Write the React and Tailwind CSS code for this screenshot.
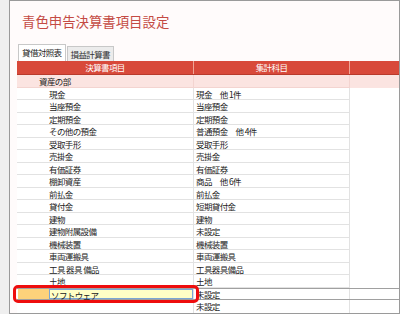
import React from "react";

const rows = [
  { a: "現金", b: "現金　他 1件" },
  { a: "当座預金", b: "当座預金" },
  { a: "定期預金", b: "定期預金" },
  { a: "その他の預金", b: "普通預金　他 4件" },
  { a: "受取手形", b: "受取手形" },
  { a: "売掛金", b: "売掛金" },
  { a: "有価証券", b: "有価証券" },
  { a: "棚卸資産", b: "商品　他 6件" },
  { a: "前払金", b: "前払金" },
  { a: "貸付金", b: "短期貸付金" },
  { a: "建物", b: "建物" },
  { a: "建物附属設備", b: "未設定" },
  { a: "機械装置", b: "機械装置" },
  { a: "車両運搬具", b: "車両運搬具" },
  { a: "工具 器具 備品", b: "工具器具備品" },
  { a: "土地", b: "土地" },
];

function App() {
  return (
    <div
      className="w-[400px] h-[314px] bg-[#efefef] flex overflow-hidden"
      style={{ fontFamily: '"Noto Sans CJK JP", "Noto Sans", sans-serif' }}
    >
      <div className="w-[9px] shrink-0" />

      <div className="flex-1 border border-[#9a9a9a] bg-[#fffbfb] flex flex-col">
        {/* title */}
        <h1 className="mt-[12px] ml-[12px] h-[16px] leading-[16px] text-[13.4px] text-[#c44a43]">
          青色申告決算書項目設定
        </h1>

        {/* tabs */}
        <div className="mt-[15px] ml-[8px] flex items-end gap-[1px] h-[17px]">
          <div className="h-[17px] px-[3px] bg-white border border-b-0 border-[#c8c8c8] text-[8.5px] leading-[15px] text-[#222] tracking-[-0.6px]">
            貸借対照表
          </div>
          <div className="h-[15px] px-[3px] bg-[#ececec] border border-b-0 border-[#c8c8c8] text-[8.5px] leading-[14px] text-[#333] tracking-[-0.6px]">
            損益計算書
          </div>
        </div>

        {/* table */}
        <div className="ml-[7px] flex flex-col text-[8.5px] text-[#222] tracking-[-0.6px]">
          <div className="flex h-[14px] bg-[#d8493a] text-white leading-[13px] border-b border-[#b83a2c]">
            <div className="w-[177px] text-center border-r border-[#f0a596]">決算書項目</div>
            <div className="w-[156px] text-center border-r border-[#f0a596]">集計科目</div>
            <div className="flex-1" />
          </div>

          <div className="flex h-[12.5px] bg-[#fbe4e1] leading-[12px]">
            <div className="w-[177px] pl-[22px] border-r border-b border-[#f3d4d0]">資産の部</div>
            <div className="w-[156px] border-r border-b border-[#f3d4d0]" />
            <div className="flex-1" />
          </div>

          {rows.map((r, i) => (
            <div key={i} className="flex h-[12.5px] bg-white leading-[12px]">
              <div className="w-[177px] pl-[32px] border-r border-b border-[#e2e2e2] whitespace-pre">{r.a}</div>
              <div className="w-[156px] pl-[2px] border-r border-b border-[#e2e2e2] whitespace-pre">{r.b}</div>
              <div className="flex-1" />
            </div>
          ))}

          {/* selected row */}
          <div className="relative flex h-[12.5px] bg-white leading-[11px] border-y border-[#a0a0a0]">
            <div className="w-[177px] flex border-r border-[#e2e2e2]">
              <div className="w-[31px] ml-[1px] bg-[#fdd27b]" />
              <div className="flex-1 bg-[#ffffc6] border border-[#7ba6d4] pl-[1px]">ソフトウェア</div>
            </div>
            <div className="w-[156px] pl-[2px] border-r border-[#e2e2e2]">未設定</div>
            <div className="flex-1" />
            <div className="absolute left-[-4px] top-[-4px] w-[186px] h-[18px] border-[3px] border-[#ee0d0d] rounded-[5px]" />
          </div>

          <div className="flex h-[12.5px] bg-white leading-[12px]">
            <div className="w-[177px] border-r border-[#e2e2e2]" />
            <div className="w-[156px] pl-[2px] border-r border-[#e2e2e2]">未設定</div>
            <div className="flex-1" />
          </div>
        </div>
      </div>
    </div>
  );
}

export default App;
